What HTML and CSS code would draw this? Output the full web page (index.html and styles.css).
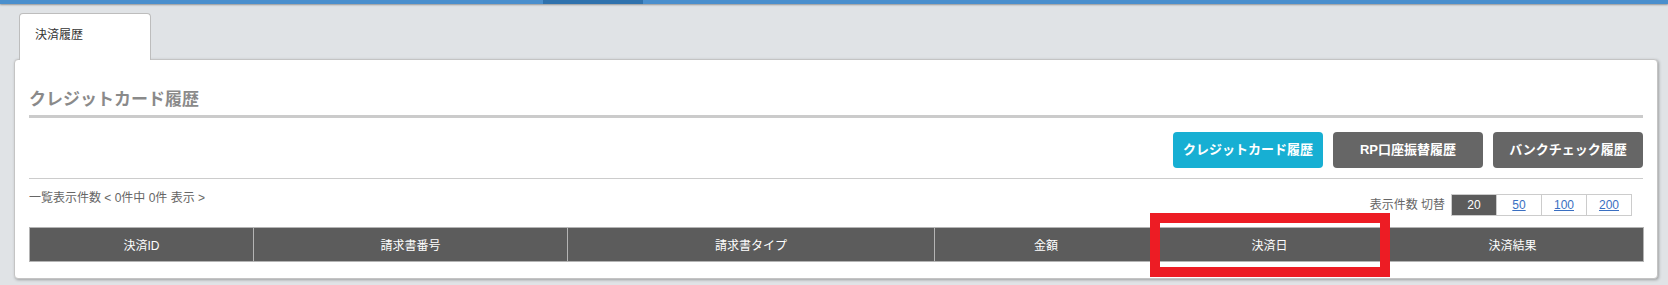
FILE: index.html
```html
<!DOCTYPE html>
<html lang="ja">
<head>
<meta charset="utf-8">
<title>決済履歴</title>
<link rel="stylesheet" href="styles.css">
</head>
<body>
<div class="topbar"><div class="topbar-active"></div></div>
<div class="tabs">
  <div class="tab">決済履歴</div>
</div>
<div class="panel">
  <h2 class="heading">クレジットカード履歴</h2>
  <div class="btnrow">
    <button class="btn btn-active">クレジットカード履歴</button>
    <button class="btn">RP口座振替履歴</button>
    <button class="btn">バンクチェック履歴</button>
  </div>
  <div class="listbar">
    <div class="count">一覧表示件数 &lt; 0件中 0件 表示 &gt;</div>
    <div class="perpage">
      <span class="perpage-label">表示件数 切替</span>
      <div class="pager">
        <span class="cell cell-active">20</span>
        <a class="cell" href="#">50</a>
        <a class="cell" href="#">100</a>
        <a class="cell" href="#">200</a>
      </div>
    </div>
  </div>
  <table class="grid">
    <colgroup>
      <col class="c1"><col class="c2"><col class="c3"><col class="c4"><col class="c5"><col class="c6">
    </colgroup>
    <thead>
      <tr>
        <th>決済ID</th>
        <th>請求書番号</th>
        <th>請求書タイプ</th>
        <th>金額</th>
        <th>決済日</th>
        <th>決済結果</th>
      </tr>
    </thead>
  </table>
</div>
<div class="highlight"></div>
</body>
</html>
```

FILE: styles.css
```css
* { box-sizing: border-box; }
html, body { margin: 0; padding: 0; }
body {
  width: 1668px;
  height: 285px;
  background: #e0e3e6;
  font-family: "Liberation Sans", "Noto Sans CJK JP", sans-serif;
  color: #333;
  overflow: hidden;
  position: relative;
}
.topbar {
  height: 4px;
  background: #4a8fcd;
  box-shadow: 0 1px 2px rgba(0,0,0,0.35);
  display: flex;
  padding-left: 543px;
}
.topbar-active {
  width: 100px;
  height: 4px;
  background: #2f72ad;
}
.tabs {
  padding: 9px 0 0 19px;
  display: flex;
}
.tab {
  position: relative;
  z-index: 1;
  width: 132px;
  height: 47px;
  margin-bottom: -1px;
  background: #fff;
  border: 1px solid #bdbdbd;
  border-bottom: none;
  border-radius: 4px 4px 0 0;
  padding: 11px 0 0 15px;
  font-size: 12px;
  line-height: 20px;
  color: #333;
}
.panel {
  margin: 0 10px 0 14px;
  background: #fff;
  border: 1px solid #c4c4c4;
  border-radius: 4px;
  box-shadow: 1px 1px 3px rgba(0,0,0,0.3);
  padding: 0 14px 16px 14px;
}
.heading {
  margin: 0;
  padding: 28px 0 3px 0;
  font-size: 17px;
  line-height: 24px;
  font-weight: bold;
  color: #8a8a8a;
  border-bottom: 3px solid #cbcbcb;
}
.btnrow {
  display: flex;
  justify-content: flex-end;
  gap: 10px;
  margin-top: 14px;
  padding-bottom: 10px;
  border-bottom: 1px solid #cccccc;
}
.btn {
  width: 150px;
  height: 36px;
  border: none;
  border-radius: 4px;
  background: #666666;
  color: #fff;
  font-family: inherit;
  font-size: 13px;
  font-weight: bold;
  padding: 0;
  line-height: 36px;
}
.btn-active { background: #17afd3; }
.listbar {
  display: flex;
  justify-content: space-between;
  align-items: flex-start;
  padding: 10px 11px 0 0;
}
.count {
  font-size: 12px;
  line-height: 18px;
  color: #666;
}
.perpage {
  display: flex;
  align-items: center;
  gap: 6px;
  margin-top: 5px;
}
.perpage-label {
  font-size: 12px;
  line-height: 18px;
  color: #666;
}
.pager {
  display: flex;
  border: 1px solid #cccccc;
}
.cell {
  width: 45px;
  height: 20px;
  line-height: 20px;
  text-align: center;
  font-size: 12px;
  color: #3a6fc2;
  text-decoration: underline;
  border-left: 1px solid #cccccc;
  background: #fff;
}
.cell:first-child { border-left: none; width: 44px; }
.cell-active {
  background: #5c5c5c;
  color: #fff;
  text-decoration: none;
}
.grid {
  margin-top: 11px;
  width: 1614px;
  border-collapse: collapse;
  table-layout: fixed;
}
.c1 { width: 224px; }
.c2 { width: 314px; }
.c3 { width: 367px; }
.c4 { width: 223px; }
.c5 { width: 224px; }
.c6 { width: 262px; }
.grid th {
  height: 34px;
  padding: 0;
  background: #5c5c5c;
  color: #fff;
  font-weight: normal;
  font-size: 12px;
  border: 1px solid #b4b4b4;
  text-align: center;
}
.highlight {
  position: absolute;
  left: 1150px;
  top: 213px;
  width: 240px;
  height: 64px;
  border: 10px solid #ed1c24;
  z-index: 5;
}
```
